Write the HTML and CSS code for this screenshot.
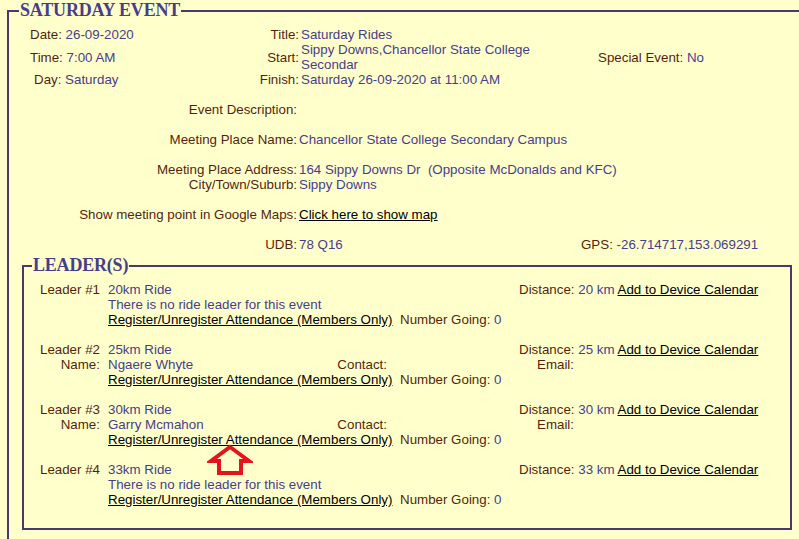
FILE: index.html
```html
<!DOCTYPE html>
<html lang="en">
<head>
    <meta charset="UTF-8">
    <title>Saturday Event</title>
    <link rel="stylesheet" href="styles.css">
</head>
<body>
    <fieldset class="event">
        <legend>Saturday Event</legend>

        <div class="summary">
            <div class="side"><span class="lbl">Date:</span> 26-09-2020</div>
            <div class="key">Title:</div>
            <div class="val">Saturday Rides</div>
            <div></div>

            <div class="side"><span class="lbl">Time:</span> 7:00 AM</div>
            <div class="key">Start:</div>
            <div class="val">Sippy Downs,Chancellor State College Secondar</div>
            <div class="special"><span class="lbl">Special Event:</span> No</div>

            <div class="side day"><span class="lbl">Day:</span> Saturday</div>
            <div class="key">Finish:</div>
            <div class="val">Saturday 26-09-2020 at 11:00 AM</div>
            <div></div>
        </div>

        <div class="info">
            <div class="key">Event Description:</div>
            <div class="val"></div>
        </div>
        <div class="info">
            <div class="key">Meeting Place Name:</div>
            <div class="val">Chancellor State College Secondary Campus</div>
        </div>
        <div class="info">
            <div class="key">Meeting Place Address:</div>
            <div class="val">164 Sippy Downs Dr &nbsp;(Opposite McDonalds and KFC)</div>
            <div class="key">City/Town/Suburb:</div>
            <div class="val">Sippy Downs</div>
        </div>
        <div class="info">
            <div class="key">Show meeting point in Google Maps:</div>
            <div class="val"><a href="#">Click here to show map</a></div>
        </div>
        <div class="info">
            <div class="key">UDB:</div>
            <div class="val split">
                <span class="udb">78 Q16</span>
                <span><span class="lbl">GPS:</span> -26.714717,153.069291</span>
            </div>
        </div>

        <fieldset class="leaders">
            <legend>Leader(s)</legend>

            <div class="leader">
                <div class="key">Leader #1</div>
                <div class="val">20km Ride</div>
                <div></div>
                <div class="dist"><span class="lbl">Distance:</span> 20 km <a href="#">Add to Device Calendar</a></div>

                <div></div>
                <div class="val">There is no ride leader for this event</div>
                <div></div>
                <div></div>

                <div></div>
                <div><a href="#">Register/Unregister Attendance (Members Only)</a></div>
                <div class="going"><span class="lbl">Number Going:</span> 0</div>
                <div></div>
            </div>

            <div class="leader">
                <div class="key">Leader #2</div>
                <div class="val">25km Ride</div>
                <div></div>
                <div class="dist"><span class="lbl">Distance:</span> 25 km <a href="#">Add to Device Calendar</a></div>

                <div class="key">Name:</div>
                <div class="val named">Ngaere Whyte <span class="lbl">Contact:</span></div>
                <div></div>
                <div class="email lbl">Email:</div>

                <div></div>
                <div><a href="#">Register/Unregister Attendance (Members Only)</a></div>
                <div class="going"><span class="lbl">Number Going:</span> 0</div>
                <div></div>
            </div>

            <div class="leader">
                <div class="key">Leader #3</div>
                <div class="val">30km Ride</div>
                <div></div>
                <div class="dist"><span class="lbl">Distance:</span> 30 km <a href="#">Add to Device Calendar</a></div>

                <div class="key">Name:</div>
                <div class="val named">Garry Mcmahon <span class="lbl">Contact:</span></div>
                <div></div>
                <div class="email lbl">Email:</div>

                <div></div>
                <div><a href="#">Register/Unregister Attendance (Members Only)</a></div>
                <div class="going"><span class="lbl">Number Going:</span> 0</div>
                <div></div>
            </div>

            <div class="leader">
                <div class="key">Leader #4</div>
                <div class="val">33km Ride</div>
                <div></div>
                <div class="dist"><span class="lbl">Distance:</span> 33 km <a href="#">Add to Device Calendar</a></div>

                <div></div>
                <div class="val">There is no ride leader for this event</div>
                <div></div>
                <div></div>

                <div></div>
                <div><a href="#">Register/Unregister Attendance (Members Only)</a></div>
                <div class="going"><span class="lbl">Number Going:</span> 0</div>
                <div></div>
            </div>
        </fieldset>
    </fieldset>

    <svg class="pointer" width="46" height="32" viewBox="0 0 46 32">
        <path d="M23 3 L42 17 L34 17 L34 29 L12 29 L12 17 L4 17 Z" fill="none" stroke="#e2141c" stroke-width="4" stroke-linejoin="miter"/>
    </svg>
</body>
</html>
```

FILE: styles.css
```css
html {
    overflow: hidden;
}
body {
    margin: 0;
    background-color: #ffffcc;
    font-family: "Liberation Sans", Arial, sans-serif;
    font-size: 13.33px;
    line-height: 15px;
    color: #483d8b;
    position: relative;
}
a {
    color: #000;
    text-decoration: underline;
}
.lbl,
.key {
    color: #561f0c;
}

/* 外框 */
.event {
    box-sizing: border-box;
    width: 812px;
    margin: 0 0 0 7px;
    padding: 6px 0 30px 0;
    border: 2px solid #4a3a6c;
}
.event legend,
.leaders legend {
    font-family: "Liberation Serif", "DejaVu Serif", serif;
    font-weight: bold;
    font-size: 18px;
    line-height: 21px;
    letter-spacing: -0.2px;
    text-transform: uppercase;
    color: #483d8b;
    padding: 0 1px;
}
.event > legend {
    margin-left: 10px;
}

/* 顶部三列 */
.summary {
    display: grid;
    grid-template-columns: 130px 158px 240px auto;
    column-gap: 2px;
    align-items: center;
}
.side {
    padding-left: 21px;
    white-space: nowrap;
}
.side.day {
    padding-left: 25px;
}
.summary .key {
    text-align: right;
}
.special {
    padding-left: 55px;
}

/* 下面的行 */
.info {
    display: grid;
    grid-template-columns: 288px auto;
    column-gap: 2px;
    margin-top: 15px;
}
.info .key {
    text-align: right;
}
.split {
    display: flex;
}
.udb {
    width: 282px;
}

/* 领队 */
.leaders {
    box-sizing: border-box;
    width: 770px;
    margin: 3px 0 0 13px;
    padding: 6px 0 6px 0;
    border: 2px solid #4a3a6c;
}
.leaders legend {
    margin-left: 8px;
}
.leader {
    display: grid;
    grid-template-columns: 76px 300px 119px auto;
    margin-bottom: 15px;
}
.leader .key {
    text-align: right;
}
.leader > div:nth-child(4n+2) {
    padding-left: 8px;
}
.named {
    display: flex;
    justify-content: space-between;
    padding-right: 13px;
}
.email {
    padding-left: 18px;
}

/* 红色箭头 */
.pointer {
    position: absolute;
    left: 207px;
    top: 444px;
}
```
